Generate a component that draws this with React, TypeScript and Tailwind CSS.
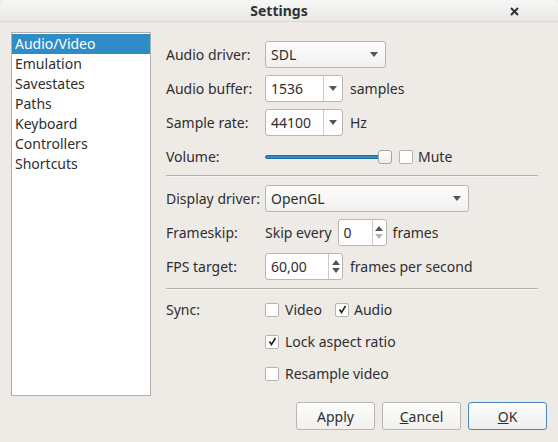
import React from "react";

const font = { fontFamily: '"Noto Sans", "Open Sans", sans-serif' };

const Arrow = ({ className = "" }: { className?: string }) => (
  <svg width="8" height="5" viewBox="0 0 8 5" className={className}>
    <path d="M0 0h8L4 5z" fill="currentColor" />
  </svg>
);

const SpinArrows = ({ downDisabled = false }: { downDisabled?: boolean }) => (
  <div className="flex flex-col items-center justify-center gap-[3px] w-[14px] border-l border-[#cfcbc6] h-full">
    <svg width="8" height="5" viewBox="0 0 8 5" className="text-[#555]">
      <path d="M4 0l4 5H0z" fill="currentColor" />
    </svg>
    <svg width="8" height="5" viewBox="0 0 8 5" className={downDisabled ? "text-[#b5b5b5]" : "text-[#555]"}>
      <path d="M0 0h8L4 5z" fill="currentColor" />
    </svg>
  </div>
);

const Checkbox = ({ checked = false }: { checked?: boolean }) => (
  <div className="w-[14px] h-[14px] bg-white border border-[#b7b3ae] rounded-[2px] flex items-center justify-center shrink-0">
    {checked && (
      <svg width="9" height="9" viewBox="0 0 9 9">
        <path d="M1.5 4.5l2 3 4-6.5" stroke="#222" strokeWidth="1.6" fill="none" />
      </svg>
    )}
  </div>
);

const Row = ({ label, children, gap = "mt-[7px]" }: { label: string; children?: React.ReactNode; gap?: string }) => (
  <div className={`flex items-center h-[27px] ${gap}`}>
    <div className="w-[99px] shrink-0">{label}</div>
    <div className="flex items-center">{children}</div>
  </div>
);

const Separator = () => <div className="border-t border-[#b3afaa] border-b border-b-[#f8f7f5]" />;

export default function App() {
  const items = ["Audio/Video", "Emulation", "Savestates", "Paths", "Keyboard", "Controllers", "Shortcuts"];

  return (
    <div className="w-[558px] h-[442px] bg-[#eeebe7] flex flex-col text-[14px] text-[#2e2e2e] overflow-hidden" style={font}>
      {/* title bar */}
      <div className="h-[22px] rounded-t-[5px] bg-gradient-to-b from-[#f7f7f6] to-[#e8e8e6] border-b border-[#dcd9d5] flex items-center relative">
        <div className="flex-1 text-center font-bold text-[14px] text-[#2e3436]">Settings</div>
        <svg className="absolute left-[510px] top-[7px]" width="9" height="9" viewBox="0 0 9 9">
          <path d="M1 1l7 7M8 1L1 8" stroke="#2e3436" strokeWidth="2" />
        </svg>
      </div>

      <div className="flex px-[11px] pt-[10px]">
        {/* category list */}
        <div className="w-[140px] h-[364px] bg-white border border-[#b3afaa] pt-[1px] shrink-0">
          {items.map((item, i) => (
            <div
              key={item}
              className={`h-[20px] leading-[19px] pl-[3px] ${i === 0 ? "bg-[#308cc6] text-white" : ""}`}
            >
              {item}
            </div>
          ))}
        </div>

        {/* form */}
        <div className="ml-[15px] mt-[9px] w-[372px]">
          <Row label="Audio driver:" gap="">
            <div className="w-[121px] h-[27px] rounded-[3px] border border-[#b9b5b0] bg-gradient-to-b from-[#fdfdfd] to-[#f1f0ee] flex items-center justify-between pl-[5px] pr-[7px]">
              <span>SDL</span>
              <Arrow className="text-[#555]" />
            </div>
          </Row>
          <Row label="Audio buffer:">
            <div className="w-[78px] h-[27px] rounded-[3px] border border-[#b9b5b0] bg-white flex items-center">
              <span className="flex-1 pl-[5px]">1536</span>
              <div className="w-[19px] h-full border-l border-[#cfcbc6] flex items-center justify-center">
                <Arrow className="text-[#555]" />
              </div>
            </div>
            <span className="ml-[7px]">samples</span>
          </Row>
          <Row label="Sample rate:">
            <div className="w-[78px] h-[27px] rounded-[3px] border border-[#b9b5b0] bg-white flex items-center">
              <span className="flex-1 pl-[5px]">44100</span>
              <div className="w-[19px] h-full border-l border-[#cfcbc6] flex items-center justify-center">
                <Arrow className="text-[#555]" />
              </div>
            </div>
            <span className="ml-[7px]">Hz</span>
          </Row>
          <Row label="Volume:">
            <div className="relative w-[128px] h-[14px] flex items-center">
              <div className="w-[116px] h-[4px] rounded-full bg-[#308cc6] border border-[#1f6ea3]" />
              <div className="absolute left-[113px] top-0 w-[14px] h-[14px] rounded-[3px] border border-[#a8a4a0] bg-gradient-to-b from-white to-[#eeeeec]" />
            </div>
            <div className="ml-[6px]">
              <Checkbox />
            </div>
            <span className="ml-[5px]">Mute</span>
          </Row>

          <div className="mt-[5px] mb-[8px]">
            <Separator />
          </div>

          <Row label="Display driver:" gap="">
            <div className="w-[204px] h-[27px] rounded-[3px] border border-[#b9b5b0] bg-gradient-to-b from-[#fdfdfd] to-[#f1f0ee] flex items-center justify-between pl-[5px] pr-[7px]">
              <span>OpenGL</span>
              <Arrow className="text-[#555]" />
            </div>
          </Row>
          <Row label="Frameskip:">
            <span>Skip every</span>
            <div className="ml-[6px] w-[49px] h-[27px] rounded-[3px] border border-[#b9b5b0] bg-white flex items-center">
              <span className="flex-1 pl-[5px]">0</span>
              <SpinArrows downDisabled />
            </div>
            <span className="ml-[6px]">frames</span>
          </Row>
          <Row label="FPS target:">
            <div className="w-[78px] h-[27px] rounded-[3px] border border-[#b9b5b0] bg-white flex items-center">
              <span className="flex-1 pl-[5px]">60,00</span>
              <SpinArrows />
            </div>
            <span className="ml-[7px]">frames per second</span>
          </Row>

          <div className="mt-[8px] mb-[6px]">
            <Separator />
          </div>

          <Row label="Sync:" gap="">
            <Checkbox />
            <span className="ml-[6px]">Video</span>
            <div className="ml-[13px]">
              <Checkbox checked />
            </div>
            <span className="ml-[5px]">Audio</span>
          </Row>
          <Row label="" gap="mt-[5px]">
            <Checkbox checked />
            <span className="ml-[6px]">Lock aspect ratio</span>
          </Row>
          <Row label="" gap="mt-[5px]">
            <Checkbox />
            <span className="ml-[6px]">Resample video</span>
          </Row>
        </div>
      </div>

      {/* buttons */}
      <div className="flex justify-end gap-[7px] px-[11px] mt-[6px]">
        <button className="w-[79px] h-[28px] rounded-[3px] border border-[#b9b5b0] bg-gradient-to-b from-[#fdfdfd] to-[#f1f0ee]">Apply</button>
        <button className="w-[79px] h-[28px] rounded-[3px] border border-[#b9b5b0] bg-gradient-to-b from-[#fdfdfd] to-[#f1f0ee]">
          <span className="underline">C</span>ancel
        </button>
        <button className="w-[79px] h-[28px] rounded-[3px] border border-[#4a86b8] bg-gradient-to-b from-[#fdfdfd] to-[#eceeef]">
          <span className="underline">O</span>K
        </button>
      </div>
    </div>
  );
}
